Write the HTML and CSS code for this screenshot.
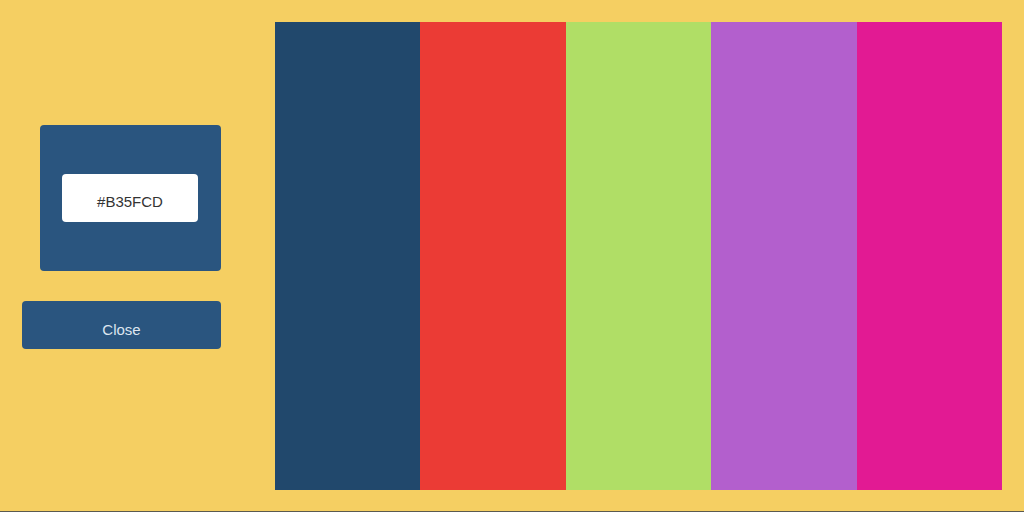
FILE: index.html
```html
<!DOCTYPE html>
<html>
<head>
<meta charset="utf-8">
<link rel="stylesheet" href="styles.css">
</head>
<body>
<div class="page">
  <aside class="side">
    <div class="picker">
      <div class="hex">#B35FCD</div>
    </div>
    <button class="close">Close</button>
  </aside>
  <main class="palette">
    <div class="swatch s1"></div>
    <div class="swatch s2"></div>
    <div class="swatch s3"></div>
    <div class="swatch s4"></div>
    <div class="swatch s5"></div>
  </main>
</div>
</body>
</html>
```
FILE: styles.css
```css
html, body {
  margin: 0;
  padding: 0;
}
body {
  background: #f5cf62;
  font-family: "Liberation Sans", Arial, sans-serif;
}
.page {
  display: flex;
  height: 511px;
  border-bottom: 1px solid #5a5a50;
  box-sizing: content-box;
}
.side {
  width: 275px;
  flex: none;
  display: flex;
  flex-direction: column;
  padding-top: 125px;
  box-sizing: border-box;
}
.picker {
  margin-left: 40px;
  width: 181px;
  height: 146px;
  background: #2a557f;
  border-radius: 4px;
  box-sizing: border-box;
  padding: 49px 23px 0 22px;
}
.hex {
  height: 48px;
  box-sizing: border-box;
  padding-top: 7px;
  background: #fff;
  border-radius: 4px;
  display: flex;
  align-items: center;
  justify-content: center;
  font-size: 15px;
  color: #333;
}
.close {
  margin: 30px 0 0 22px;
  width: 199px;
  height: 48px;
  background: #2a557f;
  border: none;
  border-radius: 4px;
  color: #dde5ef;
  font-family: "Liberation Sans", Arial, sans-serif;
  font-size: 15px;
  padding: 9px 0 0;
}
.palette {
  display: flex;
  margin-top: 22px;
  width: 727px;
  height: 468px;
}
.swatch {
  flex: 1;
}
.s1 { background: #21486c; }
.s2 { background: #eb3b35; }
.s3 { background: #b0de66; }
.s4 { background: #b35fcd; }
.s5 { background: #e21a93; }
```
